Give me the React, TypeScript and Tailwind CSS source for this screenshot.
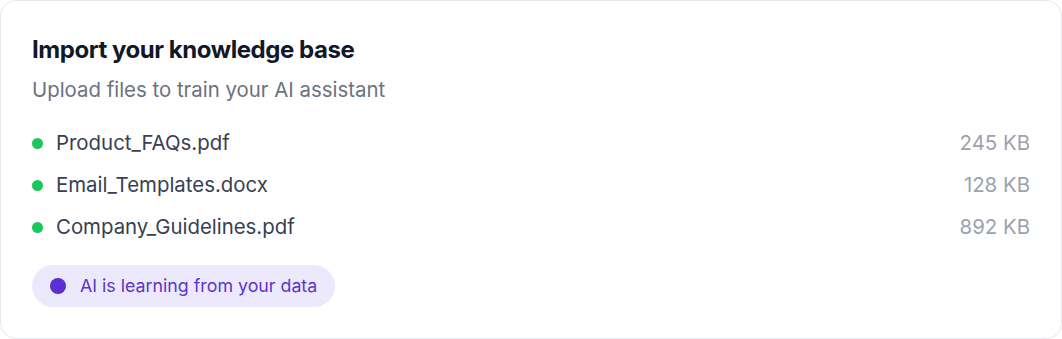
const files = [
  { name: 'Product_FAQs.pdf', size: '245 KB' },
  { name: 'Email_Templates.docx', size: '128 KB' },
  { name: 'Company_Guidelines.pdf', size: '892 KB' },
]

export default function App() {
  return (
    <div className="w-[1062px] h-[339px] bg-white font-['Inter',sans-serif]">
      <div className="h-full rounded-2xl border border-[#e5e7eb] bg-white px-[31px] pt-8 pb-[31px] flex flex-col">
        {/* Header */}
        <h2 className="text-[24px] leading-[34px] font-bold text-[#111827] tracking-[-0.019em]">
          Import your knowledge base
        </h2>
        <p className="mt-[9px] text-[20.4px] leading-[28px] text-[#6b7280]">
          Upload files to train your AI assistant
        </p>

        {/* File list */}
        <ul className="mt-[25px] flex flex-col gap-[14px]">
          {files.map((f) => (
            <li key={f.name} className="flex items-center justify-between h-[28px]">
              <div className="flex items-center gap-[13px]">
                <span className="w-[11px] h-[11px] rounded-full bg-[#16c95a]" />
                <span className="text-[20.4px] leading-[28px] text-[#374151]">{f.name}</span>
              </div>
              <span className="text-[20.4px] leading-[28px] text-[#9ca3af]">{f.size}</span>
            </li>
          ))}
        </ul>

        {/* Status badge */}
        <div className="mt-auto self-start inline-flex items-center gap-[14px] h-[42px] pl-[18px] pr-[18px] rounded-full bg-[#ede9fd]">
          <span className="w-[16px] h-[16px] rounded-full bg-[#5b2fd1]" />
          <span className="text-[17.8px] leading-[26px] text-[#5b35c8]">AI is learning from your data</span>
        </div>
      </div>
    </div>
  )
}
